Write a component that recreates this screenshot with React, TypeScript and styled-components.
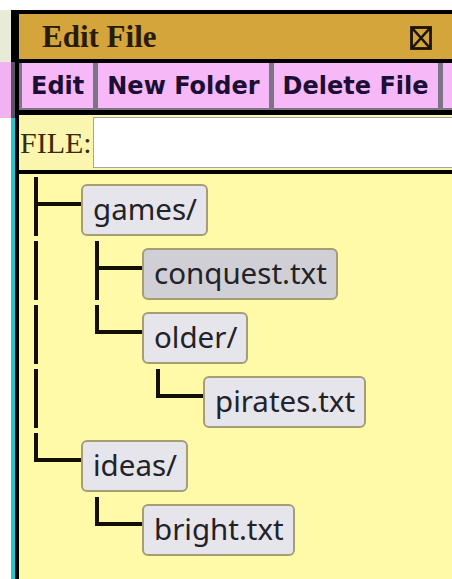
import * as React from 'react';
import styled, { createGlobalStyle } from 'styled-components';

const ink = '#140f05';

const GlobalStyle = createGlobalStyle`
  html, body {
    margin: 0;
    padding: 0;
    background: #ffffff;
  }
`;

const Desktop = styled.div`
  display: flex;
  width: 452px;
  height: 579px;
  overflow: hidden;
  background: #ffffff;
`;

const Backdrop = styled.div`
  flex: none;
  width: 15px;
  display: flex;
  flex-direction: column;
`;

const PeekPane = styled.div<{ $fill: string; $edge: string; $h?: number }>`
  flex: ${p => (p.$h ? 'none' : '1')};
  height: ${p => (p.$h ? `${p.$h}px` : 'auto')};
  background: ${p => p.$fill};
  border-right: 4px solid ${p => p.$edge};
`;

const Window = styled.div`
  flex: none;
  width: 437px;
  margin-top: 10px;
  border-top: 4px solid #000;
  border-left: 4px solid #000;
  display: flex;
  flex-direction: column;
`;

const TitleBar = styled.div`
  height: 45px;
  display: flex;
  align-items: center;
  padding: 0 24px 0 23px;
  background: #d4a53b;
  border-bottom: 4px solid #000;
`;

const Title = styled.h1`
  margin: 0;
  flex: 1;
  font-family: 'Liberation Serif', serif;
  font-weight: bold;
  font-size: 31px;
  color: #2a1b08;
`;

const CloseButton = styled.button`
  display: flex;
  padding: 0;
  margin-top: 3px;
  border: 0;
  background: none;
  color: #1c1408;
`;

const Toolbar = styled.div`
  display: flex;
  gap: 5px;
  padding: 0 0 2px 3px;
  background: #7b7586;
  border-bottom: 5px solid #000;
  box-sizing: border-box;
  height: 52px;
  overflow: hidden;
`;

const ToolButton = styled.button`
  flex: none;
  padding: 0 9px;
  border: 0;
  background: #f6b8f6;
  font-family: 'DejaVu Sans', sans-serif;
  font-weight: bold;
  font-size: 24px;
  color: #1d0e35;
`;

const ToolFill = styled.div`
  flex: 1;
  background: #f6b8f6;
`;

const FileRow = styled.div`
  height: 55px;
  display: flex;
  background: #fbf6ae;
  border-bottom: 4px solid #000;
`;

const FileLabel = styled.label`
  flex: none;
  width: 74px;
  display: flex;
  align-items: center;
  padding-left: 1px;
  box-sizing: border-box;
  font-family: 'Liberation Serif', serif;
  font-size: 30px;
  color: #3a2a10;
`;

const FileInput = styled.input`
  flex: 1;
  min-width: 0;
  margin: 2px 0;
  border: 1px solid #a3a3a3;
  border-right: 0;
  background: #ffffff;
  font-family: 'DejaVu Sans', sans-serif;
  font-size: 22px;
`;

const Tree = styled.div`
  flex: 1;
  display: flex;
  flex-direction: column;
  gap: 5px;
  padding: 3px 0 0 15px;
  background: #fffaa7;
`;

const Row = styled.div`
  height: 59px;
  display: flex;
`;

const Guide = styled.div<{ $on: boolean }>`
  flex: none;
  width: 61px;
  box-sizing: border-box;
  border-left: 4px solid ${p => (p.$on ? ink : 'transparent')};
`;

const Joint = styled.div`
  flex: none;
  width: 47px;
  display: flex;
  flex-direction: column;
`;

const Elbow = styled.div`
  height: 29px;
  box-sizing: border-box;
  border-left: 4px solid ${ink};
  border-bottom: 4px solid ${ink};
`;

const Stem = styled.div<{ $on: boolean }>`
  flex: 1;
  border-left: 4px solid ${p => (p.$on ? ink : 'transparent')};
`;

const NodeBox = styled.div<{ $selected?: boolean }>`
  align-self: flex-start;
  margin-top: 7px;
  height: 52px;
  box-sizing: border-box;
  padding: 0 9px 0 10px;
  border: 2px solid #a49d78;
  border-radius: 6px;
  background: ${p => (p.$selected ? '#cfcfd5' : '#e5e5eb')};
  font-family: 'Noto Sans', sans-serif;
  font-size: 29.5px;
  line-height: 46px;
  color: #222228;
`;

type FileNode = { name: string; selected?: boolean; children?: FileNode[] };

const files: FileNode[] = [
  {
    name: 'games/',
    children: [
      { name: 'conquest.txt', selected: true },
      { name: 'older/', children: [{ name: 'pirates.txt' }] },
    ],
  },
  { name: 'ideas/', children: [{ name: 'bright.txt' }] },
];

type FlatRow = { node: FileNode; guides: boolean[]; last: boolean };

// Walks the tree into display rows; guides[i] says whether level i still has siblings below.
function flatten(nodes: FileNode[], guides: boolean[] = []): FlatRow[] {
  return nodes.flatMap((node, i) => {
    const last = i === nodes.length - 1;
    const row: FlatRow = { node, guides, last };
    return [row, ...flatten(node.children ?? [], [...guides, !last])];
  });
}

function CloseIcon() {
  return (
    <svg width="22" height="24" viewBox="0 0 22 24">
      <rect x="1.5" y="1.5" width="19" height="21" fill="none" stroke="currentColor" strokeWidth="2.8" />
      <path d="M2.5 2.5 L19.5 21.5 M19.5 2.5 L2.5 21.5" stroke="currentColor" strokeWidth="2.6" />
    </svg>
  );
}

export default function App() {
  const rows = flatten(files);
  return (
    <>
      <GlobalStyle />
      <Desktop>
        <Backdrop>
          <PeekPane $fill="#ffffff" $edge="#ffffff" $h={10} />
          <PeekPane $fill="#e8ebd7" $edge="#000000" $h={52} />
          <PeekPane $fill="#f1b2ef" $edge="#5b5362" $h={56} />
          <PeekPane $fill="#ffffff" $edge="#20c8cf" />
        </Backdrop>
        <Window>
          <TitleBar>
            <Title>Edit File</Title>
            <CloseButton aria-label="Close">
              <CloseIcon />
            </CloseButton>
          </TitleBar>
          <Toolbar>
            <ToolButton>Edit</ToolButton>
            <ToolButton>New Folder</ToolButton>
            <ToolButton>Delete File</ToolButton>
            <ToolFill />
          </Toolbar>
          <FileRow>
            <FileLabel htmlFor="file-name">FILE:</FileLabel>
            <FileInput id="file-name" />
          </FileRow>
          <Tree>
            {rows.map(({ node, guides, last }) => (
              <Row key={[...guides.map(String), node.name].join('/')}>
                {guides.map((on, i) => (
                  <Guide key={i} $on={on} />
                ))}
                <Joint>
                  <Elbow />
                  <Stem $on={!last} />
                </Joint>
                <NodeBox $selected={node.selected}>{node.name}</NodeBox>
              </Row>
            ))}
          </Tree>
        </Window>
      </Desktop>
    </>
  );
}
